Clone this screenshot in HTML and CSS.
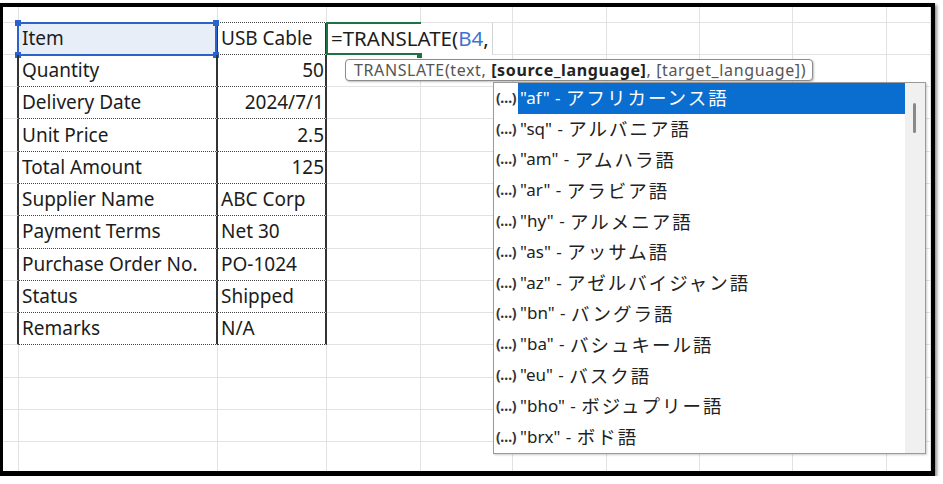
FILE: index.html
```html
<!DOCTYPE html>
<html>
<head>
<meta charset="utf-8">
<link rel="stylesheet" href="styles.css">
</head>
<body>
<div class="frame">
  <div class="sheet">
    <div class="c"></div><div class="c tt"></div><div class="c tt"></div><div class="c"></div><div class="c"></div><div class="c"></div><div class="c"></div><div class="c"></div><div class="c"></div><div class="c"></div>

    <div class="c edge"></div>
    <div class="c a sel">Item<span class="selbox"><i class="h tl"></i><i class="h tr"></i><i class="h bl"></i><i class="h br"></i></span></div>
    <div class="c b">USB Cable</div>
    <div class="c cedit"><div class="edit"><span class="gframe"></span><span class="fill"></span><span class="ftext">=TRANSLATE(<span class="ref">B4</span>,</span></div></div>
    <div class="c"></div><div class="c"></div><div class="c"></div><div class="c"></div><div class="c"></div><div class="c"></div>

    <div class="c edge"></div><div class="c a">Quantity</div><div class="c b r">50</div>
    <div class="c"></div><div class="c"></div><div class="c"></div><div class="c"></div><div class="c"></div><div class="c"></div><div class="c"></div>

    <div class="c edge"></div><div class="c a">Delivery Date</div><div class="c b r">2024/7/1</div>
    <div class="c"></div><div class="c"></div><div class="c"></div><div class="c"></div><div class="c"></div><div class="c"></div><div class="c"></div>

    <div class="c edge"></div><div class="c a">Unit Price</div><div class="c b r">2.5</div>
    <div class="c"></div><div class="c"></div><div class="c"></div><div class="c"></div><div class="c"></div><div class="c"></div><div class="c"></div>

    <div class="c edge"></div><div class="c a">Total Amount</div><div class="c b r">125</div>
    <div class="c"></div><div class="c"></div><div class="c"></div><div class="c"></div><div class="c"></div><div class="c"></div><div class="c"></div>

    <div class="c edge"></div><div class="c a">Supplier Name</div><div class="c b">ABC Corp</div>
    <div class="c"></div><div class="c"></div><div class="c"></div><div class="c"></div><div class="c"></div><div class="c"></div><div class="c"></div>

    <div class="c edge"></div><div class="c a">Payment Terms</div><div class="c b">Net 30</div>
    <div class="c"></div><div class="c"></div><div class="c"></div><div class="c"></div><div class="c"></div><div class="c"></div><div class="c"></div>

    <div class="c edge"></div><div class="c a">Purchase Order No.</div><div class="c b">PO-1024</div>
    <div class="c"></div><div class="c"></div><div class="c"></div><div class="c"></div><div class="c"></div><div class="c"></div><div class="c"></div>

    <div class="c edge"></div><div class="c a">Status</div><div class="c b">Shipped</div>
    <div class="c"></div><div class="c"></div><div class="c"></div><div class="c"></div><div class="c"></div><div class="c"></div><div class="c"></div>

    <div class="c edge"></div><div class="c a">Remarks</div><div class="c b">N/A</div>
    <div class="c"></div><div class="c"></div><div class="c"></div><div class="c"></div><div class="c"></div><div class="c"></div><div class="c"></div>

    <div class="c"></div><div class="c"></div><div class="c"></div><div class="c"></div><div class="c"></div><div class="c"></div><div class="c"></div><div class="c"></div><div class="c"></div><div class="c"></div>
    <div class="c"></div><div class="c"></div><div class="c"></div><div class="c"></div><div class="c"></div><div class="c"></div><div class="c"></div><div class="c"></div><div class="c"></div><div class="c"></div>
    <div class="c"></div><div class="c"></div><div class="c"></div><div class="c"></div><div class="c"></div><div class="c"></div><div class="c"></div><div class="c"></div><div class="c"></div><div class="c"></div>
    <div class="c"></div><div class="c"></div><div class="c"></div><div class="c"></div><div class="c"></div><div class="c"></div><div class="c"></div><div class="c"></div><div class="c"></div><div class="c"></div>
  </div>

  <div class="tip">TRANSLATE(text,&nbsp;<b>[source_language]</b>,&nbsp;[target_language])</div>

  <div class="dd">
    <div class="list">
      <div class="it on"><span class="ic">(…)</span><span class="lb">"af" - <span class="ja">アフリカーンス語</span></span></div>
      <div class="it"><span class="ic">(…)</span><span class="lb">"sq" - <span class="ja">アルバニア語</span></span></div>
      <div class="it"><span class="ic">(…)</span><span class="lb">"am" - <span class="ja">アムハラ語</span></span></div>
      <div class="it"><span class="ic">(…)</span><span class="lb">"ar" - <span class="ja">アラビア語</span></span></div>
      <div class="it"><span class="ic">(…)</span><span class="lb">"hy" - <span class="ja">アルメニア語</span></span></div>
      <div class="it"><span class="ic">(…)</span><span class="lb">"as" - <span class="ja">アッサム語</span></span></div>
      <div class="it"><span class="ic">(…)</span><span class="lb">"az" - <span class="ja">アゼルバイジャン語</span></span></div>
      <div class="it"><span class="ic">(…)</span><span class="lb">"bn" - <span class="ja">バングラ語</span></span></div>
      <div class="it"><span class="ic">(…)</span><span class="lb">"ba" - <span class="ja">バシュキール語</span></span></div>
      <div class="it"><span class="ic">(…)</span><span class="lb">"eu" - <span class="ja">バスク語</span></span></div>
      <div class="it"><span class="ic">(…)</span><span class="lb">"bho" - <span class="ja">ボジュプリー語</span></span></div>
      <div class="it"><span class="ic">(…)</span><span class="lb">"brx" - <span class="ja">ボド語</span></span></div>
    </div>
    <div class="sb"><span class="th"></span></div>
  </div>
</div>
</body>
</html>
```

FILE: styles.css
```css
* { box-sizing: border-box; margin: 0; padding: 0; }
body {
  margin: 0;
  background: #fff;
  font-family: "Noto Sans", "Noto Sans CJK JP", sans-serif;
  color: #1c1c1c;
}
.frame {
  position: relative;
  margin-top: 3px;
  width: 935px;
  height: 473px;
  border-style: solid;
  border-color: #000;
  border-width: 4px 4px 5px 3px;
  box-shadow: 2px 2px 3px rgba(0, 0, 0, 0.45);
  overflow: hidden;
  background: #fff;
}
.sheet {
  display: grid;
  grid-template-columns: 16px 199px 109px 94px 92px 94px 93px 93px 94px 44px;
  grid-template-rows: 15.5px repeat(14, 32.3px);
}
.c {
  border-right: 1px solid #e2e2e2;
  border-bottom: 1px solid #e2e2e2;
  font-size: 19px;
  line-height: 1;
  display: flex;
  align-items: center;
  white-space: nowrap;
  position: relative;
  color: #1c1c1c;
}
.tt { border-bottom: 1px dotted #444; }
.edge { border-right: 2px solid #333; }
.a {
  border-right: 2px solid #333;
  border-bottom: 1px dotted #444;
  padding-left: 3px;
}
.b {
  border-right: 2px solid #333;
  border-bottom: 1px dotted #444;
  padding-left: 3px;
  padding-right: 1px;
}
.r { justify-content: flex-end; }
.sel { background: #e8eef8; }
.selbox {
  position: absolute;
  left: -2px;
  top: -1px;
  right: -1px;
  bottom: -2px;
  border: 2px solid #2b63cc;
}
.h {
  position: absolute;
  width: 6px;
  height: 6px;
  background: #2b63cc;
}
.tl { left: -4px; top: -4px; }
.tr { right: -4px; top: -4px; }
.bl { left: -4px; bottom: -4px; }
.br { right: -4px; bottom: -4px; }

.edit {
  position: absolute;
  left: -1px;
  top: 0;
  width: 167px;
  height: calc(100% + 1px);
  background: #fff;
  border-right: 1px solid #d4d4d4;
  z-index: 2;
  display: flex;
  align-items: center;
  padding-left: 5px;
  font-size: 20.5px;
}
.gframe {
  position: absolute;
  left: 0;
  top: -1px;
  width: 95px;
  height: calc(100% + 1px);
  border: 2px solid #1f7244;
  border-right: none;
}
.fill {
  position: absolute;
  left: 91px;
  bottom: -3px;
  width: 5px;
  height: 5px;
  background: #1f7244;
}
.ftext { position: relative; }
.ref { color: #3d73cf; }

.tip {
  position: absolute;
  left: 342px;
  top: 52px;
  height: 22px;
  padding: 0 6px 0 8px;
  border: 1px solid #8c8c8c;
  border-radius: 4px;
  background: #fff;
  font-size: 16px;
  letter-spacing: 0.62px;
  color: #555;
  display: flex;
  align-items: center;
  white-space: nowrap;
  z-index: 3;
  box-shadow: 1px 1px 2px rgba(0, 0, 0, 0.25);
}
.tip b { color: #222; font-weight: 700; }

.dd {
  position: absolute;
  left: 490px;
  top: 75px;
  width: 433px;
  height: 372px;
  border: 1px solid #9a9a9a;
  background: #fff;
  display: flex;
  z-index: 3;
  box-shadow: 1px 1px 2px rgba(0, 0, 0, 0.2);
}
.list {
  flex: 1;
  display: flex;
  flex-direction: column;
}
.it {
  height: 30.8px;
  display: flex;
  align-items: center;
  font-size: 17px;
  color: #222;
  white-space: nowrap;
}
.ic {
  width: 24px;
  padding-left: 2px;
  padding-bottom: 2px;
  font-size: 14px;
  font-weight: 700;
  color: #333;
  letter-spacing: -0.5px;
}
.lb {
  flex: 1;
  height: 100%;
  display: flex;
  align-items: center;
  padding-left: 2px;
  padding-bottom: 2px;
  white-space: pre;
  word-spacing: 1px;
}
.ja {
  font-size: 18.5px;
  letter-spacing: 2px;
}
.on .lb { background: #0a6ed1; color: #fff; }
.sb {
  width: 20px;
  background: #f0f0f0;
  position: relative;
}
.th {
  position: absolute;
  left: 8px;
  top: 20px;
  width: 3px;
  height: 30px;
  background: #888;
  border-radius: 2px;
}
```
